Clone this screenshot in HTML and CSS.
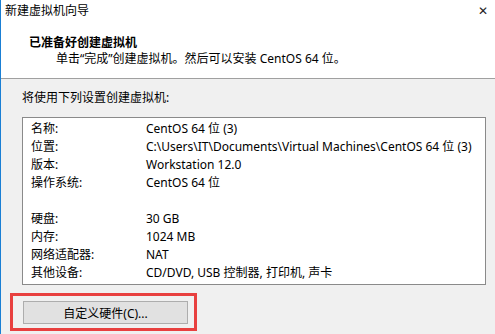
FILE: index.html
```html
<!DOCTYPE html>
<html lang="zh-CN">
<head>
  <meta charset="UTF-8" />
  <title>新建虚拟机向导</title>
  <link rel="stylesheet" href="styles.css">
</head>
<body>
  <div class="window">
    <div class="header">
      <div class="titlebar">
        <span class="title">新建虚拟机向导</span>
        <span class="close">&#x2715;</span>
      </div>
      <h1>已准备好创建虚拟机</h1>
      <p class="sub">单击“完成”创建虚拟机。然后可以安装 CentOS 64 位。</p>
    </div>

    <div class="content">
      <div class="intro">将使用下列设置创建虚拟机:</div>
      <div class="summary">
        <div class="row"><span class="label">名称:</span><span>CentOS 64 位 (3)</span></div>
        <div class="row"><span class="label">位置:</span><span>C:\Users\IT\Documents\Virtual Machines\CentOS 64 位 (3)</span></div>
        <div class="row"><span class="label">版本:</span><span>Workstation 12.0</span></div>
        <div class="row"><span class="label">操作系统:</span><span>CentOS 64 位</span></div>
        <div class="row"></div>
        <div class="row"><span class="label">硬盘:</span><span>30 GB</span></div>
        <div class="row"><span class="label">内存:</span><span>1024 MB</span></div>
        <div class="row"><span class="label">网络适配器:</span><span>NAT</span></div>
        <div class="row"><span class="label">其他设备:</span><span>CD/DVD, USB 控制器, 打印机, 声卡</span></div>
      </div>

      <div class="highlight">
        <button class="btn-custom">自定义硬件(C)...</button>
      </div>
    </div>
  </div>
</body>
</html>
```

FILE: styles.css
```css
body {
  margin: 0;
  font-family: "Noto Sans", "Noto Sans CJK SC", sans-serif;
  font-size: 12px;
  color: #000;
  background: #f0f0f0;
}

.window {
  width: 494px;
  height: 334px;
  border-left: 1px solid #1a7fd4;
  overflow: hidden;
}

.header {
  background: #fff;
  height: 79px;
  border-bottom: 1px solid #a0a0a0;
  box-sizing: border-box;
}

.titlebar {
  display: flex;
  justify-content: space-between;
  padding: 2px 7px 0 4px;
  height: 18px;
  line-height: 18px;
}

.close {
  font-size: 12px;
  color: #222;
}

h1 {
  margin: 14px 0 0 28px;
  font-size: 12px;
  font-weight: bold;
  line-height: 16px;
  font-family: "Noto Sans CJK SC", sans-serif;
}

.sub {
  margin: 1px 0 0 55px;
  line-height: 16px;
}

.content {
  padding: 11px 0 0 21px;
}

.intro {
  line-height: 16px;
}

.summary {
  margin-top: 11px;
  width: 464px;
  height: 168px;
  box-sizing: border-box;
  background: #fff;
  border: 1px solid #8a8a8a;
  padding: 2px 0 0 8px;
}

.row {
  display: flex;
  height: 18px;
  line-height: 18px;
}

.label {
  width: 115px;
  flex-shrink: 0;
}

.highlight {
  margin: 8px 0 0 -12px;
  width: 165px;
  padding: 5px 6px 4px 10px;
  border: 3px solid #e8403f;
}

.btn-custom {
  display: block;
  width: 165px;
  height: 23px;
  padding: 0;
  font: inherit;
  background: #e1e1e1;
  border: 1px solid #adadad;
  color: #000;
}
```
